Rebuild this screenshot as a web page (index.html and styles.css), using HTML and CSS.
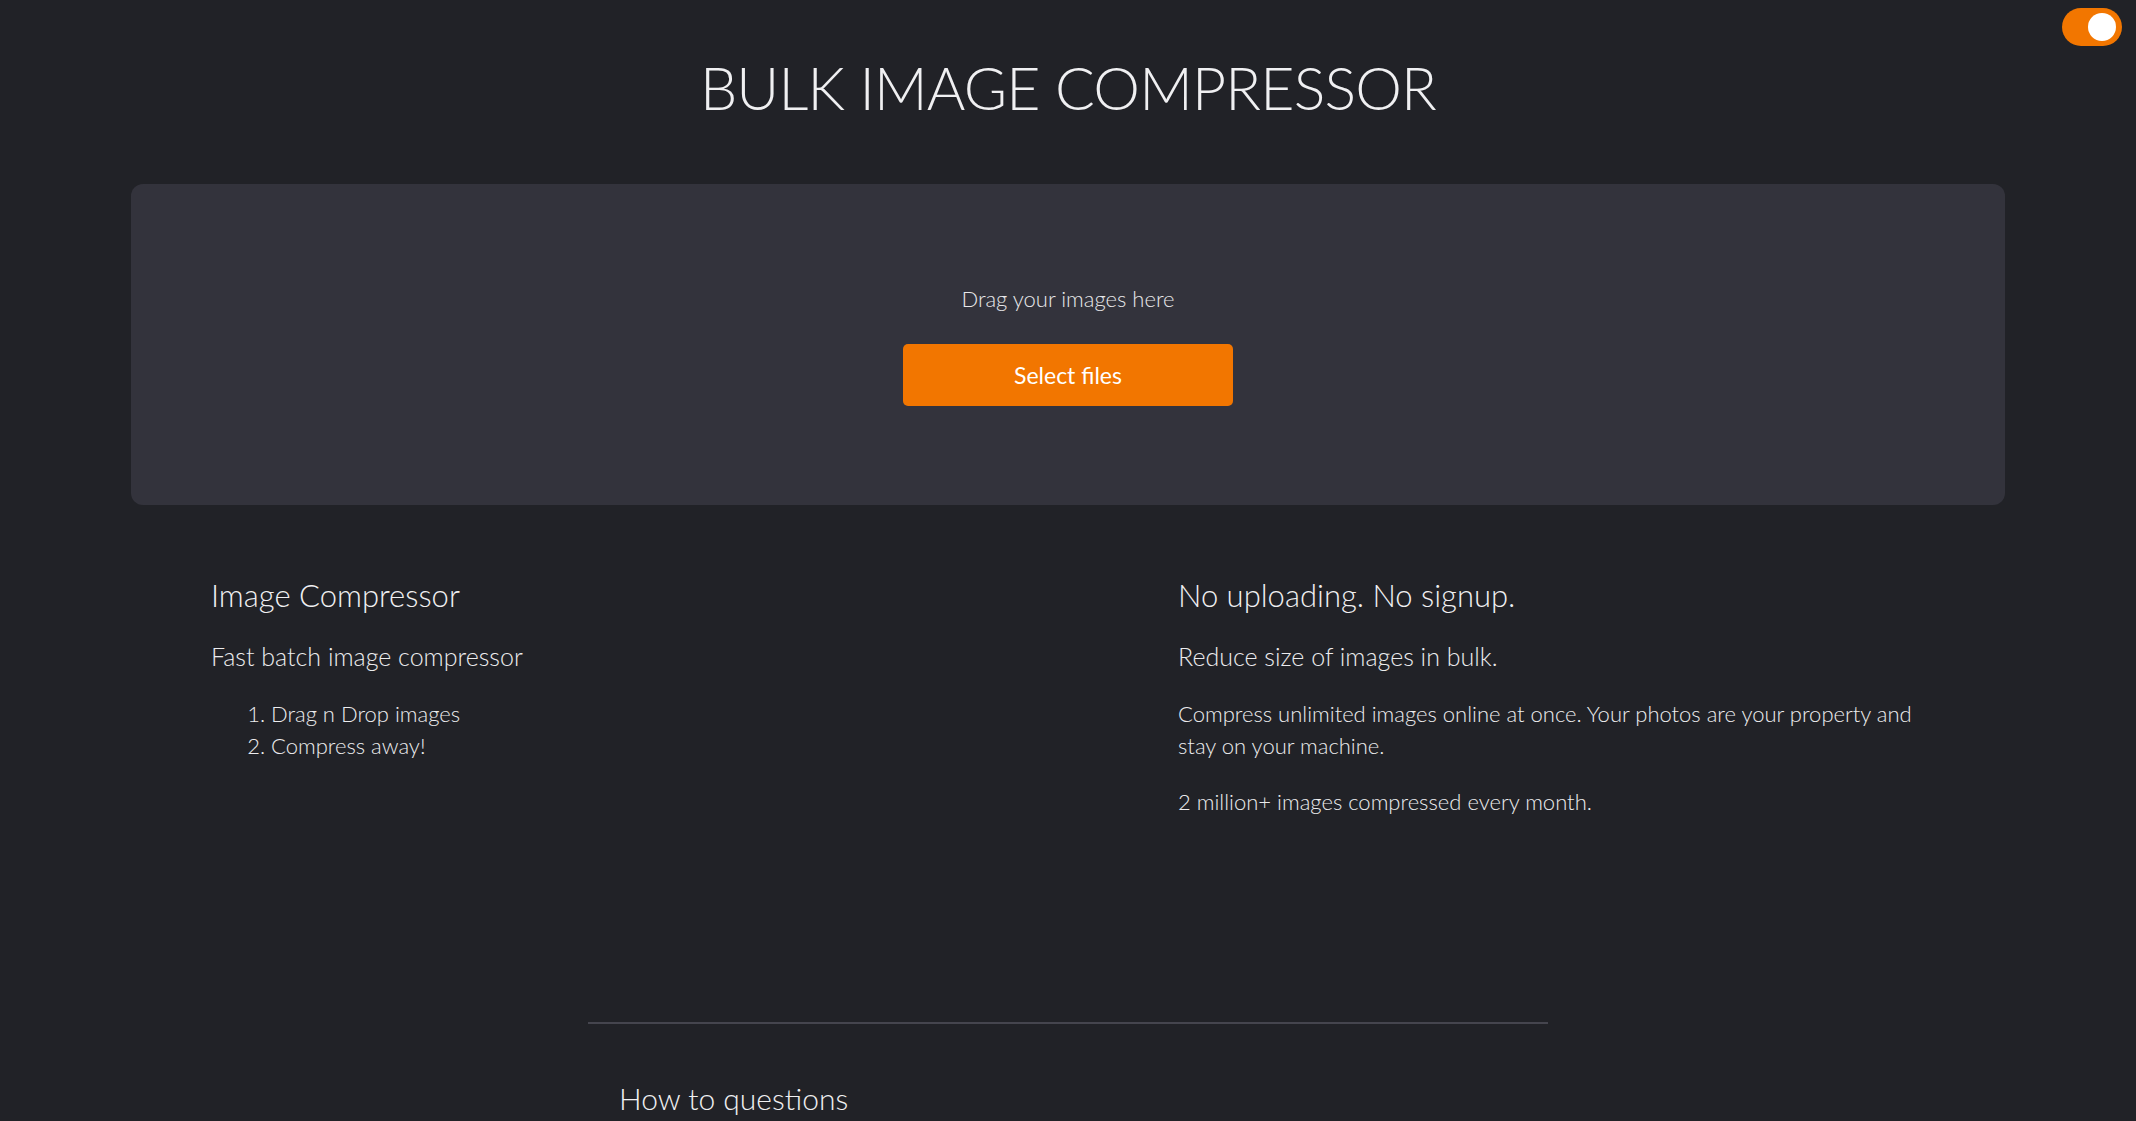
FILE: index.html
```html
<!DOCTYPE html>
<html lang="en">
<head>
<meta charset="utf-8">
<title>Bulk Image Compressor</title>
<link rel="stylesheet" href="styles.css">
</head>
<body>
<label class="toggle" aria-label="Theme">
  <span class="knob"></span>
</label>
<main class="page">
  <h1 class="title">BULK IMAGE COMPRESSOR</h1>
  <section class="dropzone">
    <p class="drop-hint">Drag your images here</p>
    <button class="select-btn" type="button">Select files</button>
  </section>
  <section class="info">
    <div class="col">
      <h3 class="col-title">Image Compressor</h3>
      <p class="lead">Fast batch image compressor</p>
      <ol class="steps">
        <li>Drag n Drop images</li>
        <li>Compress away!</li>
      </ol>
    </div>
    <div class="col">
      <h3 class="col-title">No uploading. No signup.</h3>
      <p class="lead">Reduce size of images in bulk.</p>
      <p class="text">Compress unlimited images online at once. Your photos are your property and stay on your machine.</p>
      <p class="text">2 million+ images compressed every month.</p>
    </div>
  </section>
  <section class="faq">
    <hr class="divider">
    <h3 class="faq-title">How to questions</h3>
  </section>
</main>
</body>
</html>
```

FILE: styles.css
```css
* { box-sizing: border-box; }

html, body {
  margin: 0;
  padding: 0;
  background: #212227;
  color: #ececee;
  font-family: Lato, "Open Sans", sans-serif;
  font-weight: 300;
}

body { min-height: 1121px; overflow: hidden; }

.toggle {
  position: absolute;
  top: 8px;
  left: 2062px;
  width: 60px;
  height: 38px;
  border-radius: 19px;
  background: #f27600;
}

.knob {
  position: absolute;
  top: 5px;
  right: 6px;
  width: 28px;
  height: 28px;
  border-radius: 50%;
  background: #ffffff;
}

.page {
  width: 1874px;
  margin: 0 auto;
}

.title {
  margin: 48px 0 0;
  font-size: 59px;
  line-height: 80px;
  letter-spacing: -0.8px;
  font-weight: 300;
  text-align: center;
  color: #f0f0f2;
}

.dropzone {
  margin-top: 56px;
  height: 321px;
  padding-top: 99px;
  background: #33333c;
  border-radius: 12px;
  display: flex;
  flex-direction: column;
  align-items: center;
}

.drop-hint {
  margin: 0;
  font-size: 22px;
  line-height: 32px;
  color: #e8e8ea;
}

.select-btn {
  margin-top: 29px;
  width: 330px;
  height: 62px;
  border: none;
  border-radius: 5px;
  background: #f27600;
  color: #ffffff;
  font-family: Lato, "Open Sans", sans-serif;
  font-weight: 400;
  font-size: 23px;
}

.info {
  margin-top: 70px;
  padding: 0 80px;
  display: grid;
  grid-template-columns: 967px 1fr;
}

.col-title {
  margin: 0;
  font-size: 31px;
  line-height: 40px;
  font-weight: 300;
  color: #f0f0f2;
}

.lead {
  margin: 23px 0 0;
  font-size: 25px;
  line-height: 36px;
}

.steps {
  margin: 24px 0 0;
  padding-left: 60px;
  font-size: 22px;
  line-height: 32px;
}

.text {
  margin: 24px 0 0;
  font-size: 22px;
  line-height: 32px;
}

.faq {
  width: 960px;
  margin: 204px auto 0;
}

.divider {
  margin: 0;
  border: none;
  border-top: 2px solid #45454e;
}

.faq-title {
  margin: 54px 0 0 31px;
  font-size: 30px;
  line-height: 40px;
  font-weight: 300;
  color: #f0f0f2;
}
```
